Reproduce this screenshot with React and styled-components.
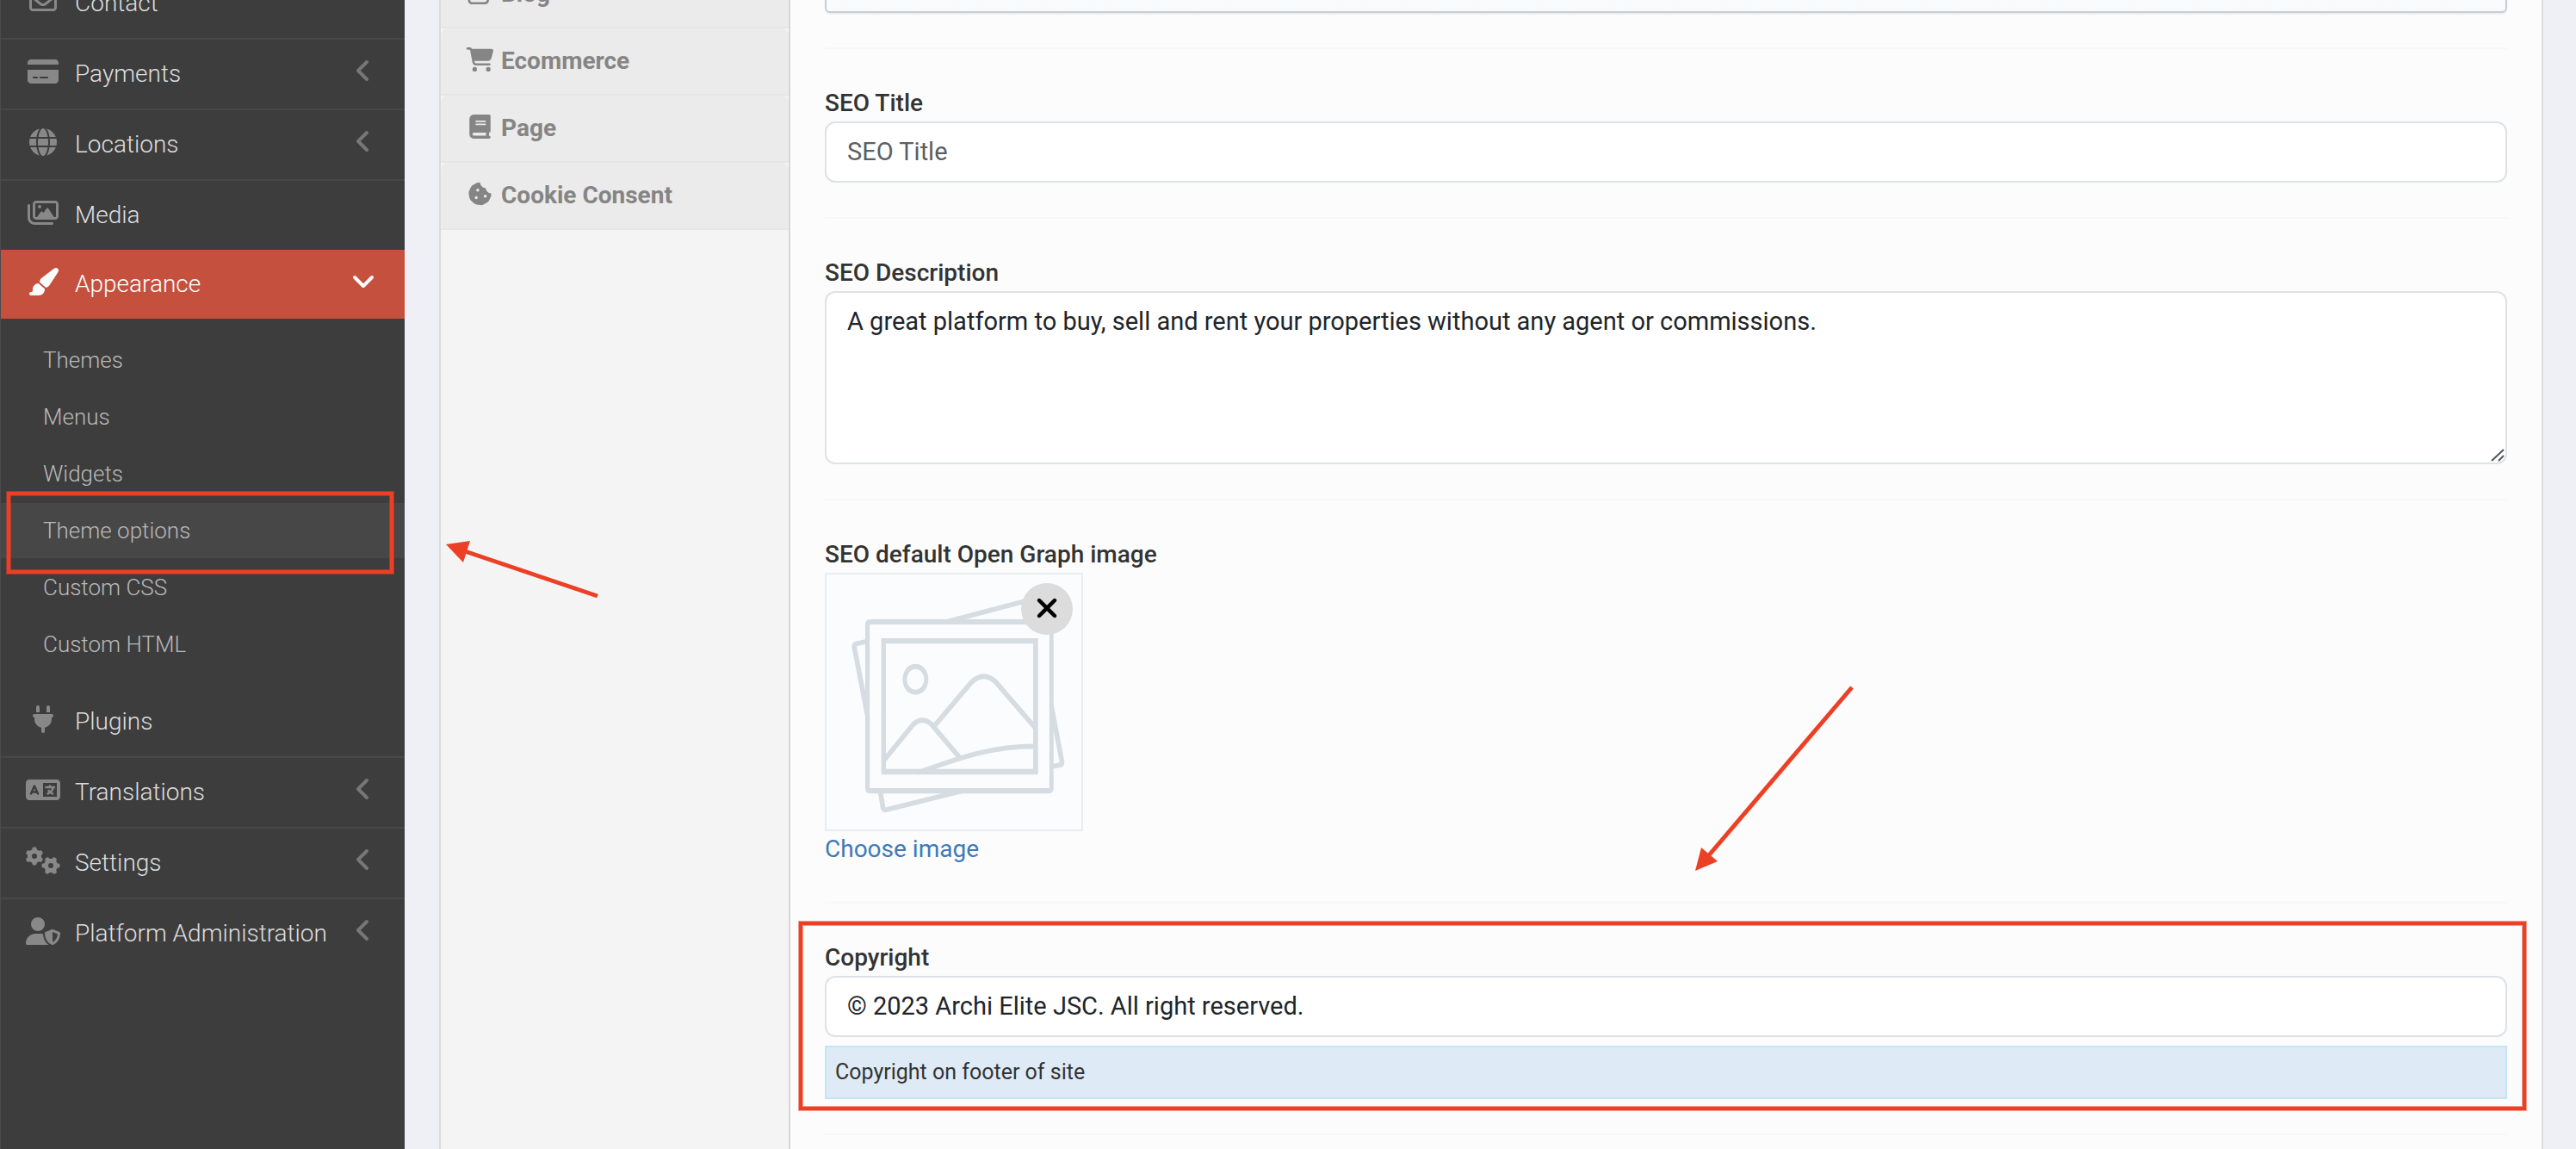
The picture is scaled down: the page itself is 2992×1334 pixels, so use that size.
import React from 'react';
import styled, { createGlobalStyle, css } from 'styled-components';
import {
  FaAngleDown,
  FaAngleLeft,
  FaBook,
  FaCartShopping,
  FaCookieBite,
  FaCreditCard,
  FaGears,
  FaGlobe,
  FaLanguage,
  FaPaintbrush,
  FaPlug,
  FaRegEnvelope,
  FaRegImages,
  FaRegPenToSquare,
  FaUserShield,
  FaXmark,
} from 'react-icons/fa6';

const GlobalStyle = createGlobalStyle`
  *, *::before, *::after { box-sizing: border-box; }
  body {
    margin: 0;
    background: #eff0f5;
    color: #333;
    font: 400 28px/42px Roboto, "Liberation Sans", sans-serif;
  }
  a { color: inherit; text-decoration: none; }
  ul { list-style: none; margin: 0; padding: 0; }
`;

const MARK = '#eb4025';
const MARK_EDGE = 'rgba(235, 64, 37, 0.5)';

const Page = styled.div`
  position: relative;
  display: flex;
  height: 100vh;
  overflow: hidden;
`;

/* ---------- sidebar ---------- */

const Sidebar = styled.nav`
  flex: 0 0 470px;
  border-left: 1px solid #4b4b4b;
  background: #3d3d3d;
`;

const Menu = styled.ul`
  margin-top: -38px;
`;

const MenuLink = styled.a`
  display: flex;
  align-items: center;
  gap: 17px;
  height: ${(p) => (p.$active ? 80 : 82)}px;
  padding: 0 34px 0 29px;
  border-top: ${(p) => (p.$active ? 0 : 2)}px solid ${(p) => (p.$plain ? 'transparent' : '#484848')};
  background: ${(p) => (p.$active ? '#c5503e' : 'transparent')};
  color: ${(p) => (p.$active ? '#fff' : '#dedede')};
  font-weight: 300;
  white-space: nowrap;
`;

const MenuIcon = styled.span`
  flex: none;
  padding-bottom: 6px;
  color: ${(p) => (p.$active ? '#fff' : '#888')};
  svg { display: block; width: 40px; height: 32px; }
`;

const MenuText = styled.span`
  flex: 1;
`;

const MenuArrow = styled.span`
  flex: none;
  padding-bottom: 8px;
  color: ${(p) => (p.$active ? '#fff' : '#777')};
  svg { display: block; width: 28px; height: 32px; }
`;

const SubMenu = styled.ul`
  display: flex;
  flex-direction: column;
  gap: 2px;
  padding: 16px 0;
`;

const SubItem = styled.li`
  position: relative;
`;

const SubLink = styled.a`
  display: block;
  padding: 0 49px;
  background: ${(p) => (p.$current ? '#474747' : 'transparent')};
  color: #b9b9b9;
  font-size: 26px;
  font-weight: 300;
  line-height: 64px;
`;

const markFrame = css`
  position: absolute;
  border: 4px solid ${MARK};
  box-shadow: 0 0 0 1px ${MARK_EDGE}, inset 0 0 0 1px ${MARK_EDGE};
  pointer-events: none;
`;

const SubItemMark = styled.span`
  ${markFrame}
  inset: -13px 13px -18px 7px;
  z-index: 1;
`;

/* ---------- theme option panel ---------- */

const Main = styled.main`
  flex: 1;
  min-width: 0;
  padding: 0 38px 0 40px;
`;

const Panel = styled.div`
  display: flex;
  height: 100%;
  border: solid #dcdcde;
  border-width: 0 2px;
`;

const Tabs = styled.nav`
  flex: 0 0 406px;
  border-right: 2px solid #d7d7d7;
  background: #f4f4f4;
`;

const TabList = styled.div`
  margin-top: -45px;
`;

const Tab = styled.a`
  display: flex;
  align-items: center;
  gap: 7px;
  height: 78px;
  padding: 0 28px;
  border-bottom: 2px solid #e6e6e6;
  border-radius: 8px 8px 0 0;
  background: #ebebeb;
  color: #858585;
  font-weight: 700;
`;

const TabIcon = styled.span`
  flex: none;
  padding-bottom: 4px;
  svg { display: block; width: 35px; height: 28px; }
`;

const Form = styled.form`
  flex: 1;
  min-width: 0;
  padding: 0 40px;
  background: #fcfcfc;
`;

const Field = styled.div`
  position: relative;
  padding: 40px 0;
  border-bottom: 2px solid #f7f7f7;
  &:first-child { margin-top: -97px; }
`;

const Label = styled.label`
  display: block;
  padding-top: 2px;
  color: #333;
  font-weight: 500;
`;

const Picker = styled.select`
  display: block;
  width: 100%;
  height: 72px;
  padding: 0 24px;
  appearance: none;
  border: 2px solid #c4cdd5;
  border-radius: 6px;
  background: linear-gradient(#fff, #f9fafb);
  box-shadow: 0 2px 0 rgba(22, 29, 37, 0.05);
  font: inherit;
`;

const control = css`
  display: block;
  width: 100%;
  border: 2px solid #dee2e6;
  border-radius: 12px;
  outline: 0;
  background: #fff;
  color: #212529;
  font: 400 29px/43px Roboto, "Liberation Sans", sans-serif;
  &::placeholder { color: #5b5f63; opacity: 1; }
`;

const TextInput = styled.input`
  ${control}
  height: 71px;
  padding: 10px 24px 12px;
`;

const AreaWrap = styled.div`
  position: relative;
`;

const TextArea = styled.textarea`
  ${control}
  height: 201px;
  padding: 12px 24px;
  resize: none;
`;

const Grip = styled.svg`
  position: absolute;
  right: 3px;
  bottom: 3px;
  width: 16px;
  height: 16px;
  stroke: #555;
  stroke-width: 2;
`;

const Preview = styled.div`
  position: relative;
  width: 300px;
  height: 300px;
  border: 2px solid #e9ecf1;
  background: #fbfcfe;
`;

const Placeholder = styled.svg`
  display: block;
  width: 100%;
  height: 100%;
`;

const RemoveButton = styled.button`
  position: absolute;
  top: 10px;
  right: 10px;
  display: flex;
  align-items: center;
  justify-content: center;
  width: 60px;
  height: 60px;
  padding: 0 0 2px;
  border: 0;
  border-radius: 50%;
  background: #dcdcdc;
  color: #000;
  svg { width: 36px; height: 36px; }
`;

const ChooseLink = styled.a`
  display: block;
  width: max-content;
  color: #4078b8;
`;

const Hint = styled.div`
  margin-top: 10px;
  padding: 8px 10px;
  border: 2px solid #c3e6f0;
  background: #deebf7;
  font-size: 25px;
`;

const FieldMark = styled.span`
  ${markFrame}
  inset: 21px -22px 27px -30px;
`;

const Arrow = styled.svg`
  position: absolute;
  left: ${(p) => p.$x}px;
  top: ${(p) => p.$y}px;
  fill: ${MARK};
  stroke: none;
  pointer-events: none;
  line { stroke: ${MARK}; stroke-width: 5; }
`;

const MENU = [
  { text: 'Contact', icon: FaRegEnvelope },
  { text: 'Payments', icon: FaCreditCard, more: true },
  { text: 'Locations', icon: FaGlobe, more: true },
  { text: 'Media', icon: FaRegImages },
  {
    text: 'Appearance',
    icon: FaPaintbrush,
    active: true,
    children: ['Themes', 'Menus', 'Widgets', 'Theme options', 'Custom CSS', 'Custom HTML'],
  },
  { text: 'Plugins', icon: FaPlug, plain: true },
  { text: 'Translations', icon: FaLanguage, more: true },
  { text: 'Settings', icon: FaGears, more: true },
  { text: 'Platform Administration', icon: FaUserShield, more: true },
];

const TABS = [
  { text: 'Blog', icon: FaRegPenToSquare },
  { text: 'Ecommerce', icon: FaCartShopping },
  { text: 'Page', icon: FaBook },
  { text: 'Cookie Consent', icon: FaCookieBite },
];

function MenuEntry({ text, icon: Icon, active, plain, more, children }) {
  return (
    <li>
      <MenuLink href="#" $active={active} $plain={plain}>
        <MenuIcon $active={active}><Icon /></MenuIcon>
        <MenuText>{text}</MenuText>
        {(more || active) && (
          <MenuArrow $active={active}>{active ? <FaAngleDown /> : <FaAngleLeft />}</MenuArrow>
        )}
      </MenuLink>
      {children && (
        <SubMenu>
          {children.map((name) => (
            <SubItem key={name}>
              <SubLink href="#" $current={name === 'Theme options'}>{name}</SubLink>
              {name === 'Theme options' && <SubItemMark />}
            </SubItem>
          ))}
        </SubMenu>
      )}
    </li>
  );
}

function PicturePlaceholder() {
  return (
    <Placeholder viewBox="121 142 888 888" fill="none" stroke="#d5dce2" strokeWidth="17" strokeLinejoin="round" aria-hidden="true">
      <path d="M268 374 L226 383 Q216 386 218 396 L268 655" />
      <path d="M308 896 L318 955 Q321 964 331 961 L600 894" />
      <path d="M530 309 L900 212" />
      <path d="M902 588 L941 792 Q943 804 933 806 L902 812" />
      <path fill="#d5dce2" stroke="none" fillRule="evenodd" d="M274 298H894Q912 298 912 316V887Q912 905 894 905H274Q256 905 256 887V316Q256 298 274 298ZM272 317V885H897V317Z" />
      <path fill="#fbfcfe" stroke="none" d="M272 317H897V885H272Z" />
      <path d="M498 668 L625 518 Q670 476 712 518 L850 678" />
      <path d="M322 788 L424 663 Q455 636 486 663 L590 786" />
      <path d="M440 832 C580 782 690 740 850 740" />
      <path fill="#d5dce2" stroke="none" fillRule="evenodd" d="M312 364H858V839H312ZM328 383V819H841V383Z" />
      <path fill="#d5dce2" stroke="none" fillRule="evenodd" d="M431 453a45 54 0 1 0 .1 0ZM431 471a30 36 0 1 1 -.1 0Z" />
    </Placeholder>
  );
}

export default function App() {
  return (
    <>
      <GlobalStyle />
      <Page>
        <Sidebar aria-label="Main menu">
          <Menu>
            {MENU.map((item) => <MenuEntry key={item.text} {...item} />)}
          </Menu>
        </Sidebar>

        <Main>
          <Panel>
            <Tabs aria-label="Option groups">
              <TabList>
                {TABS.map(({ text, icon: Icon }) => (
                  <Tab key={text} href="#">
                    <TabIcon><Icon /></TabIcon>
                    {text}
                  </Tab>
                ))}
              </TabList>
            </Tabs>

            <Form>
              <Field>
                <Picker aria-label="Option" />
              </Field>

              <Field>
                <Label htmlFor="seo-title">SEO Title</Label>
                <TextInput id="seo-title" type="text" placeholder="SEO Title" />
              </Field>

              <Field>
                <Label htmlFor="seo-description">SEO Description</Label>
                <AreaWrap>
                  <TextArea
                    id="seo-description"
                    defaultValue="A great platform to buy, sell and rent your properties without any agent or commissions."
                  />
                  <Grip viewBox="0 0 16 16" aria-hidden="true">
                    <path d="M1 15 L15 2 M9 15 L15 9" />
                  </Grip>
                </AreaWrap>
              </Field>

              <Field>
                <Label as="div">SEO default Open Graph image</Label>
                <Preview>
                  <PicturePlaceholder />
                  <RemoveButton type="button" aria-label="Remove image"><FaXmark /></RemoveButton>
                </Preview>
                <ChooseLink href="#">Choose image</ChooseLink>
              </Field>

              <Field>
                <Label htmlFor="copyright">Copyright</Label>
                <TextInput id="copyright" type="text" defaultValue="© 2023 Archi Elite JSC. All right reserved." />
                <Hint>Copyright on footer of site</Hint>
                <FieldMark />
              </Field>
            </Form>
          </Panel>
        </Main>

        <Arrow $x={510} $y={620} width="200" height="80" viewBox="510 620 200 80" aria-hidden="true">
          <line x1="694" y1="692" x2="540" y2="640" />
          <polygon points="518,632 546,628 538,653" />
        </Arrow>
        <Arrow $x={1960} $y={790} width="200" height="230" viewBox="1960 790 200 230" aria-hidden="true">
          <line x1="2151" y1="798" x2="1984" y2="994" />
          <polygon points="1969,1011 1976,984 1995,1000" />
        </Arrow>
      </Page>
    </>
  );
}
